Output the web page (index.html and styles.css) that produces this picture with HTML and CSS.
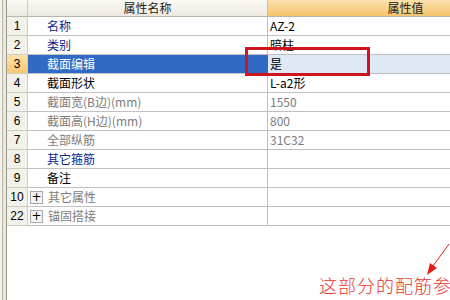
FILE: index.html
```html
<!DOCTYPE html>
<html lang="zh-CN">
<head>
    <meta charset="UTF-8">
    <title>属性编辑器</title>
    <link rel="stylesheet" href="styles.css">
</head>
<body>

<div class="screen">
    <div class="side"></div>
    <div class="main">
        <div class="grid">
            <div class="cell num head"></div>
            <div class="cell name head">属性名称</div>
            <div class="cell value head head-value">属性值</div>

            <div class="cell num">1</div>
            <div class="cell name blue">名称</div>
            <div class="cell value">AZ-2</div>

            <div class="cell num">2</div>
            <div class="cell name blue">类别</div>
            <div class="cell value">暗柱</div>

            <div class="cell num num-active">3</div>
            <div class="cell name selected">截面编辑</div>
            <div class="cell value value-active">是</div>

            <div class="cell num">4</div>
            <div class="cell name">截面形状</div>
            <div class="cell value">L-a2形</div>

            <div class="cell num">5</div>
            <div class="cell name gray">截面宽(B边)(mm)</div>
            <div class="cell value gray">1550</div>

            <div class="cell num">6</div>
            <div class="cell name gray">截面高(H边)(mm)</div>
            <div class="cell value gray">800</div>

            <div class="cell num">7</div>
            <div class="cell name gray">全部纵筋</div>
            <div class="cell value gray">31C32</div>

            <div class="cell num">8</div>
            <div class="cell name blue">其它箍筋</div>
            <div class="cell value"></div>

            <div class="cell num">9</div>
            <div class="cell name">备注</div>
            <div class="cell value"></div>

            <div class="cell num">10</div>
            <div class="cell name gray group"><span class="plus">+</span>其它属性</div>
            <div class="cell value"></div>

            <div class="cell num">22</div>
            <div class="cell name gray group"><span class="plus">+</span>锚固搭接</div>
            <div class="cell value"></div>
        </div>

        <div class="mark"></div>

        <svg class="arrow" width="40" height="50" viewBox="0 0 40 50">
            <line x1="38" y1="2" x2="22" y2="24" stroke="#e02020" stroke-width="1"/>
            <polygon points="16,33 19,21 26,26" fill="#e02020"/>
        </svg>
        <div class="note">这部分的配筋参</div>
    </div>
</div>

</body>
</html>
```

FILE: styles.css
```css
body {
    margin: 0;
    font-family: "Noto Sans CJK SC", sans-serif;
    font-size: 12px;
    background-color: #fff;
}
.screen {
    display: flex;
    width: 450px;
    height: 300px;
    overflow: hidden;
}
.side {
    width: 4px;
    flex: none;
    background-color: #ece9d8;
    border-left: 2px solid #f4f2ea;
    border-right: 1px solid #9a9a90;
    box-shadow: inset 1px 0 0 #b8b6a8;
}
.main {
    position: relative;
    flex: 1;
    overflow: hidden;
}
.grid {
    display: grid;
    grid-template-columns: 21px 240px 236px;
    grid-template-rows: 17px;
    grid-auto-rows: 19px;
}
.cell {
    box-sizing: border-box;
    border-right: 1px solid #c0c0c0;
    border-bottom: 1px solid #c0c0c0;
    display: flex;
    align-items: center;
    white-space: nowrap;
    line-height: 1;
    color: #000;
}
.num {
    justify-content: center;
    background-color: #f2f1ea;
    font-family: "Liberation Sans", sans-serif;
    font-size: 12px;
    border-color: #cfcdc2;
}
.num-active {
    background: linear-gradient(#fde2a8, #f9c870);
}
.name {
    padding-left: 19px;
}
.value {
    padding-left: 2px;
}
.head {
    justify-content: center;
    padding: 0;
    background: linear-gradient(#fbfaf6, #ece9e0);
    border-bottom-color: #b8b6aa;
    color: #222;
}
.head-value {
    background: linear-gradient(#fbe1ad, #f5c46c);
    padding-left: 40px;
}
.blue {
    color: #0c1e8a;
}
.gray {
    color: #7c7c7c;
}
.selected {
    background-color: #316ac5;
    color: #fff;
    border-right-color: #316ac5;
}
.value-active {
    background-color: #dfe8f5;
}
.group {
    padding-left: 2px;
}
.plus {
    display: inline-flex;
    align-items: center;
    justify-content: center;
    width: 11px;
    height: 11px;
    margin-right: 5px;
    border: 1px solid #a8a8a8;
    background-color: #f4f4f0;
    color: #000;
    font-family: "DejaVu Sans", sans-serif;
    font-size: 12px;
}
.mark {
    position: absolute;
    left: 238px;
    top: 47px;
    width: 119px;
    height: 23px;
    border: 3px solid #d0141e;
}
.arrow {
    position: absolute;
    left: 404px;
    top: 242px;
}
.note {
    position: absolute;
    left: 312px;
    top: 272px;
    font-size: 18px;
    color: #e8352e;
    letter-spacing: 1px;
    white-space: nowrap;
    font-weight: 300;
}
```
